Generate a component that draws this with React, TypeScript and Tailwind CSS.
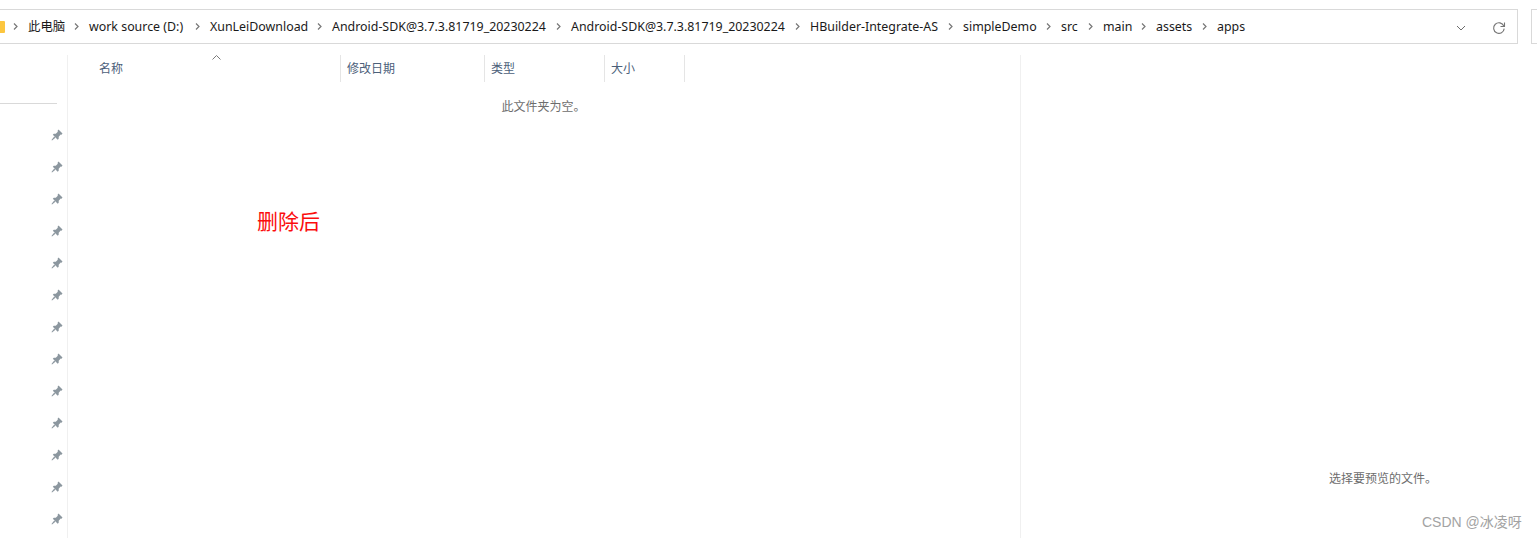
const crumbs = [
	{ label: '此电脑', width: 'w-[61px]' },
	{ label: 'work source (D:)', width: 'w-[121px]' },
	{ label: 'XunLeiDownload', width: 'w-[122px]' },
	{ label: 'Android-SDK@3.7.3.81719_20230224', width: 'w-[239px]' },
	{ label: 'Android-SDK@3.7.3.81719_20230224', width: 'w-[239px]' },
	{ label: 'HBuilder-Integrate-AS', width: 'w-[153px]' },
	{ label: 'simpleDemo', width: 'w-[98px]' },
	{ label: 'src', width: 'w-[42px]' },
	{ label: 'main', width: 'w-[53px]' },
	{ label: 'assets', width: 'w-[61px]' },
	{ label: 'apps', width: 'w-[40px]' },
];

const columns = [
	{ label: '名称', width: 'w-[273px]', pad: 'pl-[31px]' },
	{ label: '修改日期', width: 'w-[144px]', pad: 'pl-[6px]' },
	{ label: '类型', width: 'w-[120px]', pad: 'pl-[6px]' },
	{ label: '大小', width: 'w-[80px]', pad: 'pl-[6px]' },
];

const pins = Array.from({ length: 13 }, (_, i) => i);

function Chevron() {
	return (
		<svg width="6" height="9" viewBox="0 0 6 9" className="shrink-0 mr-[9px]" fill="none">
			<path d="M1 1.5l3 3-3 3" stroke="#777777" strokeWidth="1.2" />
		</svg>
	);
}

function Pin() {
	return (
		<svg width="12" height="12" viewBox="0 0 12 12" fill="#8c979f">
			<path d="M7.5 0.5l4 4-1 1.2-0.8-0.2-2 2.2 0 2-1 1L1.8 5.8l1-1 2 0 2-2.1-0.2-0.9z" />
			<path d="M3.2 7.6l1.2 1.2L1 11.5 0.5 11z" />
		</svg>
	);
}

function App() {
	return (
		<div className="relative h-[538px] w-[1537px] overflow-hidden bg-white font-['Noto_Sans','Noto_Sans_CJK_SC',sans-serif]">
			<div className="flex gap-[13px] pt-[9px]">
				<div className="flex h-[35px] w-[1518px] items-center border border-l-0 border-[#d9d9d9]">
					<div className="h-[12px] w-[5px] shrink-0 rounded-r-[1px] bg-[#fcc63f]" />
					<div className="ml-[8px] flex flex-1 items-center">
						<Chevron />
						<div className="flex items-center pt-[1px] text-[12.4px] whitespace-nowrap text-[#1a1a1a]">
							{crumbs.map((crumb, i) => (
								<div key={i} className={'flex items-center ' + crumb.width}>
									<span className="flex-1">{crumb.label}</span>
									{i < crumbs.length - 1 && <Chevron />}
								</div>
							))}
						</div>
					</div>
					<svg width="10" height="6" viewBox="0 0 10 6" fill="none" className="mr-[26px] mt-[3px]">
						<path d="M1 1l4 4 4-4" stroke="#6e6e6e" strokeWidth="1" />
					</svg>
					<svg width="14" height="14" viewBox="0 0 14 14" fill="none" className="mr-[11px] mt-[2px]">
						<path d="M11.8 5a5.3 5.3 0 1 0 .4 2.6" stroke="#757575" strokeWidth="1.1" />
						<path d="M12.5 1.5v4h-4" stroke="#757575" strokeWidth="1.1" />
					</svg>
				</div>
				<div className="h-[35px] flex-1 border border-r-0 border-[#d9d9d9]" />
			</div>

			<div className="mt-[11px] flex h-[483px]">
				<div className="w-[68px] shrink-0 border-r border-[#f0f0f0]">
					<div className="mt-[48px] h-px w-[57px] bg-[#d9d9d9]" />
					<div className="mt-[25px] flex flex-col items-start gap-[20px] pl-[51px]">
						{pins.map((i) => (
							<Pin key={i} />
						))}
					</div>
				</div>

				<div className="relative w-[953px] shrink-0 border-r border-[#f0f0f0]">
					<div className="flex h-[27px]">
						{columns.map((col) => (
							<div
								key={col.label}
								className={'flex items-center border-r border-[#e5e5e5] pt-[1px] text-[12px] text-[#4c607a] ' + col.width + ' ' + col.pad}
							>
								{col.label}
							</div>
						))}
					</div>
					<svg width="9" height="5" viewBox="0 0 9 5" fill="none" className="absolute left-[144px] top-[0px]">
						<path d="M0.5 4.5l4-4 4 4" stroke="#7a7a7a" strokeWidth="1" />
					</svg>
					<div className="mt-[17px] w-[951px] text-center text-[12px] leading-[16px] text-[#6d6d6d]">此文件夹为空。</div>
				</div>

				<div className="flex flex-1 flex-col items-end">
					<div className="mt-auto mb-[51px] mr-[100px] text-[12px] leading-[16px] text-[#6d6d6d]">选择要预览的文件。</div>
				</div>
			</div>

			<div className="absolute left-[257px] top-[207px] text-[21px] leading-[28px] text-[#fb0d0d]">删除后</div>
			<div className="absolute left-[1422px] top-[512px] font-['Liberation_Sans','Noto_Sans_CJK_SC',sans-serif] text-[14px] leading-[20px] text-[#a3a3a3]">CSDN @冰凌呀</div>
		</div>
	);
}

export default App;
